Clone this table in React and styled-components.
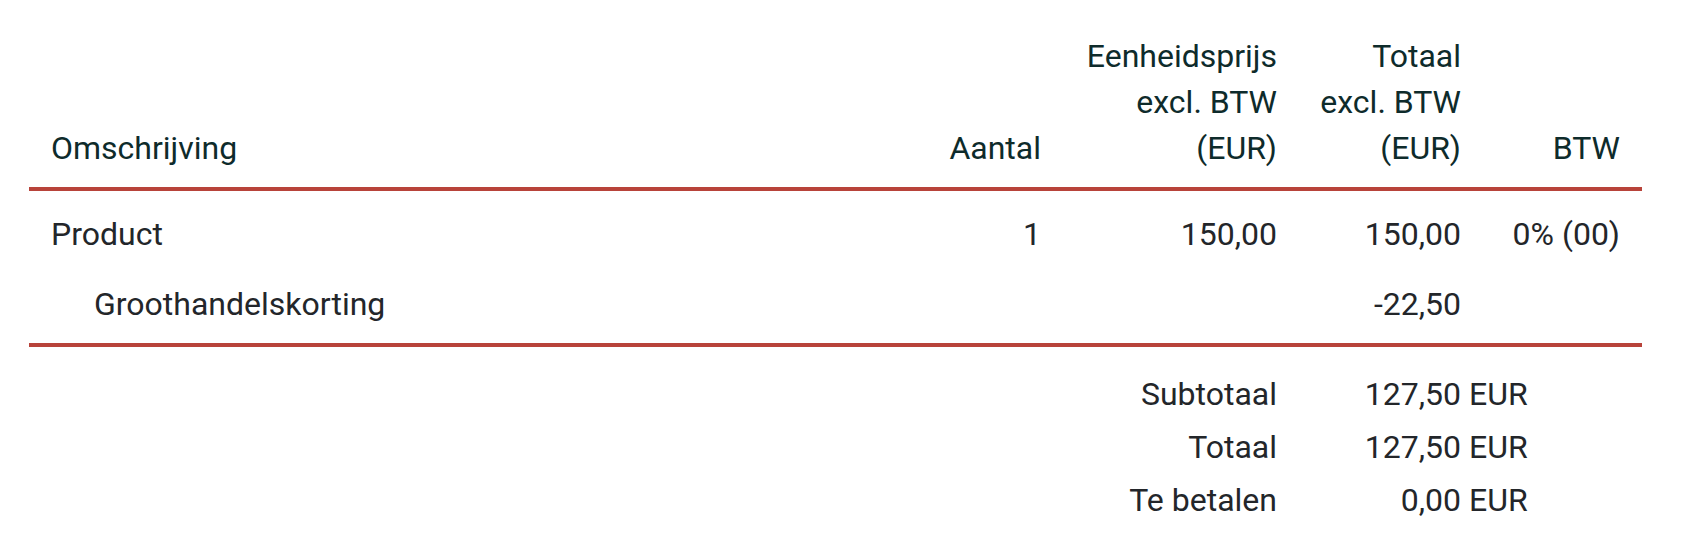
import React from 'react';
import styled, { createGlobalStyle } from 'styled-components';

const GlobalStyle = createGlobalStyle`
  body {
    margin: 0;
    background: #ffffff;
    font-family: Roboto, "Liberation Sans", sans-serif;
  }
`;

const Page = styled.div`
  padding: 17px 40px 0 29px;
`;

const Table = styled.table`
  width: 1613px;
  border-collapse: separate;
  border-spacing: 0;
  table-layout: fixed;
  font-size: 32px;
  line-height: 46px;
  color: #23262a;
`;

const HeadCell = styled.th`
  font-weight: 400;
  color: #0e2b2b;
  text-align: ${(p) => (p.$left ? 'left' : 'right')};
  vertical-align: bottom;
  padding: 16px 22px 16px ${(p) => (p.$left ? '22px' : '8px')};
  white-space: nowrap;
  border-bottom: 4px solid #b8433a;
`;

const Cell = styled.td`
  text-align: ${(p) => (p.$left ? 'left' : 'right')};
  padding: 20px 22px ${(p) => (p.$last ? '16px' : '4px')};
  padding-left: ${(p) => (p.$indent ? '65px' : '22px')};
  white-space: nowrap;
  border-bottom: ${(p) => (p.$last ? '4px solid #b8433a' : 'none')};
`;

const FootCell = styled.td`
  text-align: right;
  padding: ${(p) => (p.$first ? '24px' : '4px')} 22px 3px;
  white-space: nowrap;
`;

const Currency = styled.span`
  display: inline-block;
  width: 0;
  text-align: left;
  white-space: nowrap;
`;

const lines = [
  { name: 'Product', qty: '1', price: '150,00', total: '150,00', vat: '0% (00)' },
  { name: 'Groothandelskorting', indent: true, total: '-22,50' },
];

const totals = [
  ['Subtotaal', '127,50'],
  ['Totaal', '127,50'],
  ['Te betalen', '0,00'],
];

export default function App() {
  return (
    <Page>
      <GlobalStyle />
      <Table>
        <colgroup>
          <col style={{ width: 898 }} />
          <col style={{ width: 136 }} />
          <col style={{ width: 236 }} />
          <col style={{ width: 184 }} />
          <col style={{ width: 159 }} />
        </colgroup>
        <thead>
          <tr>
            <HeadCell $left>Omschrijving</HeadCell>
            <HeadCell>Aantal</HeadCell>
            <HeadCell>
              Eenheidsprijs
              <br />
              excl. BTW
              <br />
              (EUR)
            </HeadCell>
            <HeadCell>
              Totaal
              <br />
              excl. BTW
              <br />
              (EUR)
            </HeadCell>
            <HeadCell>BTW</HeadCell>
          </tr>
        </thead>
        <tbody>
          {lines.map((l, i) => {
            const last = i === lines.length - 1;
            return (
              <tr key={l.name}>
                <Cell $left $indent={l.indent} $last={last}>{l.name}</Cell>
                <Cell $last={last}>{l.qty}</Cell>
                <Cell $last={last}>{l.price}</Cell>
                <Cell $last={last}>{l.total}</Cell>
                <Cell $last={last}>{l.vat}</Cell>
              </tr>
            );
          })}
        </tbody>
        <tfoot>
          {totals.map(([label, value], i) => (
            <tr key={label}>
              <FootCell colSpan={2} />
              <FootCell $first={i === 0}>{label}</FootCell>
              <FootCell $first={i === 0}>
                {value}
                <Currency>{'\u00a0EUR'}</Currency>
              </FootCell>
              <FootCell />
            </tr>
          ))}
        </tfoot>
      </Table>
    </Page>
  );
}
